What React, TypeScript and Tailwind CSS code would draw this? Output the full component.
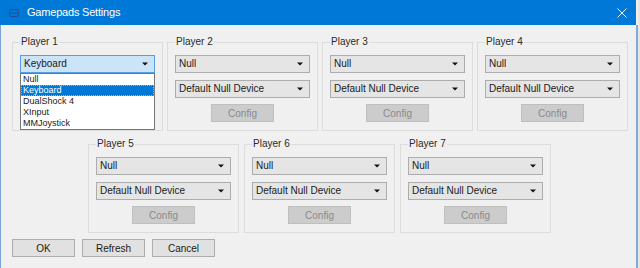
import React from 'react';

const font = { fontFamily: '"Liberation Sans", Arial, sans-serif' };

const Arrow = () => (
  <svg width="6" height="4" viewBox="0 0 6 4" className="shrink-0">
    <path d="M0 0.5 H6 L3 3.5 Z" fill="#111" />
  </svg>
);

const Combo = ({ value, active = false }: { value: string; active?: boolean }) => (
  <div
    className={`flex items-center justify-between h-[18px] pl-[3px] pr-[6px] border text-[10px] leading-none text-[#1a1a1a] ${
      active ? 'bg-[#cce4f7] border-[#569de5]' : 'bg-[#e5e5e5] border-[#adadad]'
    }`}
  >
    <span>{value}</span>
    <Arrow />
  </div>
);

const DropList = () => (
  <div className="absolute left-0 top-full w-full bg-white border border-[#767676] text-[9px] leading-[11px] text-[#1a1a1a] z-10">
    <div className="h-[11px] pl-[2px]">Null</div>
    <div className="h-[11px] pl-[2px] bg-[#0078d7] text-white outline outline-1 outline-dotted outline-offset-[-1px] outline-[#e9a06b]">Keyboard</div>
    <div className="h-[11px] pl-[2px]">DualShock 4</div>
    <div className="h-[11px] pl-[2px]">XInput</div>
    <div className="h-[11px] pl-[2px]">MMJoystick</div>
  </div>
);

const PlayerBox = ({ n, open = false }: { n: number; open?: boolean }) => (
  <fieldset className="w-[151px] shrink-0 border border-[#dcdcdc] px-[7px] pt-[7px] pb-[8px]">
    <legend className="px-[1px] text-[10px] leading-[12px] text-[#2a2a2a]">Player {n}</legend>
    <div className="flex flex-col">
      <div className="relative">
        {open ? <Combo value="Keyboard" active /> : <Combo value="Null" />}
        {open && <DropList />}
      </div>
      <div className="mt-[7px]">
        {/* hidden under the open list for player 1 */}
        <Combo value={open ? '' : 'Default Null Device'} />
      </div>
      <div className="mt-[6px] flex justify-center">
        <button className="w-[63px] h-[18px] bg-[#cccccc] border border-[#bfbfbf] text-[10px] text-[#8a8a8a]">Config</button>
      </div>
    </div>
  </fieldset>
);

const DlgButton = ({ label }: { label: string }) => (
  <button className="w-[63px] h-[18px] bg-[#e1e1e1] border border-[#adadad] text-[10px] text-[#1a1a1a]">{label}</button>
);

export default function App() {
  return (
    <div className="w-[640px] h-[268px] bg-[#f0f0f0] flex overflow-hidden" style={font}>
      {/* window */}
      <div className="w-[636px] shrink-0 flex flex-col">
        <div className="h-[25px] bg-[#0078d7] flex items-center pl-[9px] pr-[9px]">
          <svg width="10" height="8" viewBox="0 0 10 8" className="shrink-0">
            <rect x="0.5" y="0.5" width="9" height="7" rx="2" fill="none" stroke="#1b4f9c" />
            <path d="M1 4 H9" stroke="#1b4f9c" />
          </svg>
          <span className="ml-[8px] text-[11px] text-white tracking-[-0.2px]">Gamepads Settings</span>
          <svg width="10" height="10" viewBox="0 0 10 10" className="ml-auto">
            <path d="M0.5 0.5 L9.5 9.5 M9.5 0.5 L0.5 9.5" stroke="#fff" strokeWidth="1" />
          </svg>
        </div>
        <div className="flex-1 border-l border-[#7ea4d6] pl-[11px] pt-[11px]">
          <div className="flex gap-[4px]">
            <PlayerBox n={1} open />
            <PlayerBox n={2} />
            <PlayerBox n={3} />
            <PlayerBox n={4} />
          </div>
          <div className="flex gap-[5px] mt-[7px] pl-[76px]">
            <PlayerBox n={5} />
            <PlayerBox n={6} />
            <PlayerBox n={7} />
          </div>
          <div className="flex gap-[7px] mt-[6px]">
            <DlgButton label="OK" />
            <DlgButton label="Refresh" />
            <DlgButton label="Cancel" />
          </div>
        </div>
      </div>
      {/* edge of window behind */}
      <div className="flex-1 flex">
        <div className="w-[2px] mt-[25px] bg-[#86a8d6]" />
        <div className="flex-1 bg-[#e6e6e6]" />
      </div>
    </div>
  );
}
